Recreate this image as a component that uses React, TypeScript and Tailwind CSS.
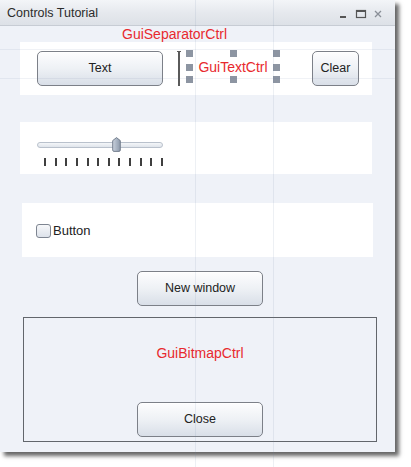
import React from "react";

const font = { fontFamily: '"Liberation Sans", Arial, sans-serif' };

function Btn({ w, label }: { w: string; label: string }) {
  return (
    <div
      className={`${w} h-[35px] shrink-0 rounded-[5px] border border-[#7c8088] bg-gradient-to-b from-[#fdfdfe] via-[#eef1f5] to-[#d9dfe8] flex items-center justify-center text-[12.5px] text-[#222] shadow-[inset_0_1px_0_#ffffff]`}
    >
      {label}
    </div>
  );
}

function Handle({ cls }: { cls: string }) {
  return <div className={`absolute w-[7px] h-[7px] bg-[#8d95a2] ${cls}`} />;
}

export default function App() {
  const ticks = Array.from({ length: 12 });
  return (
    <div className="relative w-[411px] h-[467px] bg-white overflow-hidden" style={font}>
      <div className="w-[395px] h-[452px] flex flex-col bg-[#eff2f8] shadow-[4px_4px_4px_rgba(0,0,0,0.6)]">
        {/* title bar */}
        <div className="h-[26px] shrink-0 flex items-center justify-between pl-[7px] pr-[12px] pt-[2px] bg-gradient-to-b from-[#f3f5f8] via-[#e6e9ee] to-[#dde1e7] border-b border-[#c7ccd4]">
          <span className="text-[12.5px] text-[#2b2b2b]">Controls Tutorial</span>
          <div className="flex items-center gap-[6px]">
            <svg width="12" height="12" viewBox="0 0 12 12">
              <rect x="3" y="8" width="6" height="2" fill="#555" />
            </svg>
            <svg width="12" height="12" viewBox="0 0 12 12">
              <rect x="1.5" y="2.5" width="9" height="7" fill="none" stroke="#555" strokeWidth="1.2" />
              <rect x="1" y="2" width="10" height="2" fill="#555" />
            </svg>
            <svg width="10" height="12" viewBox="0 0 10 12">
              <path d="M2 3 L8 9 M8 3 L2 9" stroke="#8a8f97" strokeWidth="1.3" />
            </svg>
          </div>
        </div>

        {/* body */}
        <div className="flex flex-col">
          <div className="mt-[1px] ml-[122px] h-[15px] leading-[15px] text-[14px] text-[#e8292e] relative z-10">
            GuiSeparatorCtrl
          </div>

          {/* panel 1 */}
          <div className="ml-[20px] w-[352px] h-[53px] bg-white flex items-start pt-[9px] pl-[17px]">
            <Btn w="w-[126px]" label="Text" />
            <div className="ml-[15px] relative w-[2px] h-[35px] bg-[#5a5a5a]">
              <div className="absolute -left-[1px] top-0 w-[4px] h-[1px] bg-[#5a5a5a]" />
            </div>
            <div className="ml-[6px] -mt-[1px] relative w-[94px] h-[33px] flex items-center justify-center">
              <span className="text-[14px] text-[#e8292e] pt-[2px]">GuiTextCtrl</span>
              <Handle cls="left-0 top-0" />
              <Handle cls="left-[44px] top-0" />
              <Handle cls="right-0 top-0" />
              <Handle cls="left-0 top-[14px]" />
              <Handle cls="right-0 top-[14px]" />
              <Handle cls="left-0 bottom-0" />
              <Handle cls="left-[44px] bottom-0" />
              <Handle cls="right-0 bottom-0" />
            </div>
            <div className="ml-[32px]">
              <Btn w="w-[47px]" label="Clear" />
            </div>
          </div>

          {/* panel 2 */}
          <div className="mt-[27px] ml-[20px] w-[352px] h-[52px] bg-white pl-[17px] pt-[15px]">
            <div className="relative w-[126px] h-[15px]">
              <div className="absolute left-0 right-0 top-[5px] h-[6px] rounded-full border border-[#b9c1cc] bg-gradient-to-b from-[#f4f6f9] to-[#dfe4eb]" />
              <svg className="absolute left-[75px] top-0" width="9" height="15" viewBox="0 0 9 15">
                <defs>
                  <linearGradient id="th" x1="0" y1="0" x2="1" y2="0">
                    <stop offset="0" stopColor="#c9d1dc" />
                    <stop offset="0.5" stopColor="#aab5c4" />
                    <stop offset="1" stopColor="#8e9aab" />
                  </linearGradient>
                </defs>
                <path d="M4.5 0.6 L8.3 3.6 L8.3 13 Q8.3 14.4 7 14.4 L2 14.4 Q0.7 14.4 0.7 13 L0.7 3.6 Z" fill="url(#th)" stroke="#6c7787" strokeWidth="0.9" />
              </svg>
            </div>
            <div className="mt-[6px] w-[126px] pl-[7px] flex justify-between">
              {ticks.map((_, i) => (
                <div key={i} className="w-[2px] h-[8px] bg-[#3f3f3f]" />
              ))}
            </div>
          </div>

          {/* panel 3 */}
          <div className="mt-[29px] ml-[22px] w-[351px] h-[54px] bg-white flex items-center pl-[14px] pt-[1px]">
            <div className="w-[15px] h-[14px] rounded-[3px] border border-[#7e8591] bg-gradient-to-b from-[#f7f8fa] to-[#dde2ea]" />
            <span className="ml-[2px] text-[13px] text-[#222]">Button</span>
          </div>

          {/* new window */}
          <div className="mt-[14px] ml-[137px]">
            <Btn w="w-[126px]" label="New window" />
          </div>

          {/* bitmap ctrl */}
          <div className="mt-[11px] ml-[23px] w-[354px] h-[125px] border border-[#62666c] flex flex-col items-center pt-[27px] pb-[4px]">
            <span className="text-[14px] leading-[16px] text-[#e8292e]">GuiBitmapCtrl</span>
            <div className="mt-auto">
              <Btn w="w-[126px]" label="Close" />
            </div>
          </div>
        </div>
      </div>

      {/* editor grid guides */}
      <div className="pointer-events-none absolute inset-0">
        <div className="absolute top-0 bottom-0 left-[195px] w-[1px] bg-[rgba(110,130,165,0.12)]" />
        <div className="absolute top-0 bottom-0 left-[273px] w-[1px] bg-[rgba(110,130,165,0.12)]" />
        <div className="absolute left-0 w-[395px] top-[49px] h-[1px] bg-[rgba(110,130,165,0.10)]" />
        <div className="absolute left-0 w-[395px] top-[78px] h-[1px] bg-[rgba(110,130,165,0.10)]" />
      </div>
    </div>
  );
}
